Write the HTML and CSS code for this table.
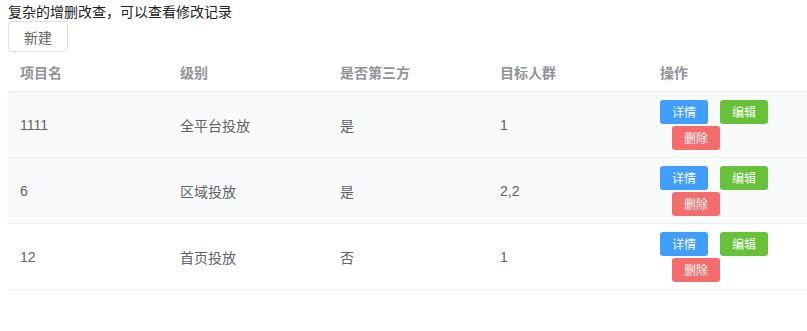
FILE: index.html
```html
<!DOCTYPE html>
<html lang="zh-CN">
  <head>
    <meta charset="UTF-8" />
    <meta name="viewport" content="width=device-width, initial-scale=1.0" />
    <title>项目管理</title>
    <link rel="stylesheet" href="styles.css">
  </head>
  <body>
    <div class="intro">复杂的增删改查，可以查看修改记录</div>
    <button class="btn btn-new">新建</button>
    <table class="list">
      <thead>
        <tr>
          <th>项目名</th>
          <th>级别</th>
          <th>是否第三方</th>
          <th>目标人群</th>
          <th>操作</th>
        </tr>
      </thead>
      <tbody>
        <tr class="shade">
          <td>1111</td>
          <td>全平台投放</td>
          <td>是</td>
          <td>1</td>
          <td>
            <div class="ops">
              <button class="btn btn-sm blue">详情</button>
              <button class="btn btn-sm green">编辑</button>
              <button class="btn btn-sm red">删除</button>
            </div>
          </td>
        </tr>
        <tr class="shade">
          <td>6</td>
          <td>区域投放</td>
          <td>是</td>
          <td>2,2</td>
          <td>
            <div class="ops">
              <button class="btn btn-sm blue">详情</button>
              <button class="btn btn-sm green">编辑</button>
              <button class="btn btn-sm red">删除</button>
            </div>
          </td>
        </tr>
        <tr>
          <td>12</td>
          <td>首页投放</td>
          <td>否</td>
          <td>1</td>
          <td>
            <div class="ops">
              <button class="btn btn-sm blue">详情</button>
              <button class="btn btn-sm green">编辑</button>
              <button class="btn btn-sm red">删除</button>
            </div>
          </td>
        </tr>
      </tbody>
    </table>
  </body>
</html>
```

FILE: styles.css
```css
html {
  overflow: hidden;
}

body {
  margin: 0 0 0 8px;
  font-family: "Liberation Sans", "Noto Sans CJK SC", sans-serif;
  font-size: 14px;
  color: #2c3e50;
}

.intro {
  height: 21px;
  line-height: 24px;
  color: #222;
}

.btn {
  font-family: inherit;
  border-radius: 4px;
  cursor: pointer;
  box-sizing: border-box;
}

.btn-new {
  display: block;
  width: 60px;
  height: 31px;
  padding: 0;
  font-size: 14px;
  color: #606266;
  background-color: #fff;
  border: 1px solid #dcdfe6;
}

.list {
  width: 800px;
  min-width: 800px;
  border-collapse: collapse;
  table-layout: fixed;
  color: #606266;
}

th,
td {
  text-align: left;
  padding: 0 12px;
  border-bottom: 1px solid #ebeef5;
  width: 136px;
}

th {
  height: 39px;
  color: #909399;
  font-weight: bold;
}

td {
  height: 65px;
}

.shade td {
  background-color: #f9fafc;
}

.ops {
  display: flex;
  flex-wrap: wrap;
  gap: 2px 12px;
  width: 136px;
}

.btn-sm {
  width: 48px;
  height: 24px;
  padding: 0;
  font-size: 12px;
  color: #fff;
  border: none;
  border-radius: 3px;
}

.btn-sm.red {
  margin-left: 12px;
}

.blue {
  background-color: #409eff;
}

.green {
  background-color: #67c23a;
}

.red {
  background-color: #f56c6c;
}
```
